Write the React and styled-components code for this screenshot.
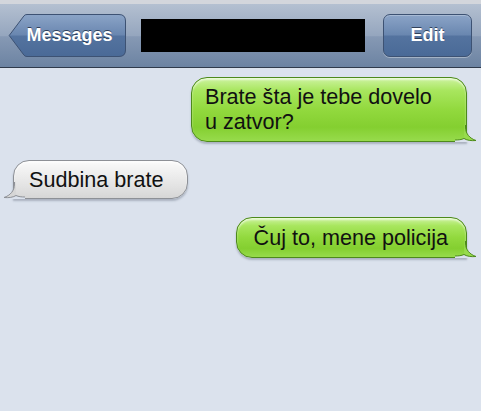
import styled, { createGlobalStyle } from "styled-components";

const GlobalStyle = createGlobalStyle`
  html, body {
    margin: 0;
    padding: 0;
    background: #dbe2ed;
  }
  body {
    font-family: "Liberation Sans", Arial, sans-serif;
  }
`;

const BG = "#dbe2ed";

const Screen = styled.div`
  width: 481px;
  height: 411px;
  background: ${BG};
  overflow: hidden;
`;

const NavBar = styled.div`
  height: 63px;
  border-top: 4px solid #d3d6dc;
  border-bottom: 1px solid #2f3a4b;
  background: linear-gradient(180deg, #b4c0d1 0%, #95a6be 50%, #8699b4 52%, #6c83a2 100%);
  display: flex;
  align-items: center;
  padding: 0 9px 0 8px;
`;

const BackButton = styled.div`
  position: relative;
  width: 118px;
  height: 43px;
  display: flex;
  align-items: center;
  justify-content: center;
  padding-left: 5px;
  box-sizing: border-box;
  color: #fff;
  font-weight: bold;
  font-size: 18px;
  text-shadow: 0 -1px 0 rgba(20, 30, 50, 0.7);
  flex-shrink: 0;

  svg {
    position: absolute;
    inset: 0;
  }
  span {
    position: relative;
  }
`;

const TitleBlock = styled.div`
  width: 224px;
  height: 33px;
  background: #000;
  margin-left: 15px;
  flex-shrink: 0;
`;

const EditButton = styled.div`
  margin-left: auto;
  width: 89px;
  height: 43px;
  box-sizing: border-box;
  border: 1px solid #3d5273;
  border-radius: 7px;
  background: linear-gradient(180deg, #8ba4c7 0%, #6a87b0 48%, #54739f 52%, #4a6a97 100%);
  box-shadow: 0 1px 0 rgba(255, 255, 255, 0.35), inset 0 1px 0 rgba(255, 255, 255, 0.25);
  display: flex;
  align-items: center;
  justify-content: center;
  color: #fff;
  font-weight: bold;
  font-size: 18px;
  text-shadow: 0 -1px 0 rgba(20, 30, 50, 0.7);
`;

const Thread = styled.div`
  display: flex;
  flex-direction: column;
  gap: 18px;
  padding: 9px 14px 0 13px;
`;

const Row = styled.div`
  display: flex;
  justify-content: ${(p) => (p.$mine ? "flex-end" : "flex-start")};
`;

const Bubble = styled.div`
  position: relative;
  box-sizing: border-box;
  width: ${(p) => (p.$width ? `${p.$width}px` : "auto")};
  padding: ${(p) => p.$pad};
  font-size: 21.6px;
  line-height: 25px;
  color: #111;
  border-radius: 16px;
  ${(p) => (p.$mine ? "border-bottom-right-radius: 0;" : "border-bottom-left-radius: 0;")}
  border: 1px solid ${(p) => (p.$mine ? "#4d8a1b" : "#8d9096")};
  background: ${(p) =>
    p.$mine
      ? "linear-gradient(180deg, #cdf3a0 0%, #a8e65e 20%, #92d93e 50%, #84cf30 78%, #97db4c 100%)"
      : "linear-gradient(180deg, #fafafa 0%, #eeeeee 35%, #e2e2e2 70%, #d6d6d6 100%)"};
  box-shadow: 0 2px 2px rgba(60, 70, 90, 0.3), inset 0 2px 2px rgba(255, 255, 255, 0.6);

  svg {
    position: absolute;
    bottom: -1px;
    ${(p) => (p.$mine ? "right: -11px;" : "left: -11px; transform: scaleX(-1);")}
  }
`;

const Tail = ({ fill, stroke }) => (
  <svg width="22" height="23" viewBox="0 0 22 23">
    <path d="M0 23 L0 21 C3.5 21 6.5 20.7 9 19.5 C12 21.3 16 22 21 21.5 L22 23 Z" fill={BG} />
    <path d="M9.5 5 L10.5 8 C10.5 15 15 19.5 21 21.5 C16 22 12 21.3 9 19.5 L9.5 5 Z" fill={fill} />
    <path
      d="M10.5 6 L10.5 8 C10.5 15 15 19.5 21 21.5 C16 22 12 21.3 9 19.5 C6.5 20.7 3.5 21 0 21"
      fill="none"
      stroke={stroke}
      strokeWidth="1"
    />
  </svg>
);

const BackShape = () => (
  <svg width="118" height="43" viewBox="0 0 118 43">
    <defs>
      <linearGradient id="bk" x1="0" y1="0" x2="0" y2="1">
        <stop offset="0" stopColor="#8ba4c7" />
        <stop offset="0.48" stopColor="#6a87b0" />
        <stop offset="0.52" stopColor="#54739f" />
        <stop offset="1" stopColor="#4a6a97" />
      </linearGradient>
    </defs>
    <path
      d="M1.2 21.5 L16 1.8 Q17 0.5 19 0.5 L111 0.5 Q117.5 0.5 117.5 7 L117.5 36 Q117.5 42.5 111 42.5 L19 42.5 Q17 42.5 16 41.2 Z"
      fill="url(#bk)"
      stroke="#3d5273"
      strokeWidth="1"
    />
  </svg>
);

export default function App() {
  return (
    <Screen>
      <GlobalStyle />
      <NavBar>
        <BackButton>
          <BackShape />
          <span>Messages</span>
        </BackButton>
        <TitleBlock />
        <EditButton>Edit</EditButton>
      </NavBar>
      <Thread>
        <Row $mine>
          <Bubble $mine $width={276} $pad="6px 20px 7px 13px">
            Brate šta je tebe dovelo
            <br />
            u zatvor?
            <Tail fill="#97db4c" stroke="#4d8a1b" />
          </Bubble>
        </Row>
        <Row>
          <Bubble $pad="6px 24px 6px 15px">
            Sudbina brate
            <Tail fill="#d6d6d6" stroke="#8d9096" />
          </Bubble>
        </Row>
        <Row $mine>
          <Bubble $mine $pad="7px 18px 7px 17px">
            Čuj to, mene policija
            <Tail fill="#97db4c" stroke="#4d8a1b" />
          </Bubble>
        </Row>
      </Thread>
    </Screen>
  );
}
